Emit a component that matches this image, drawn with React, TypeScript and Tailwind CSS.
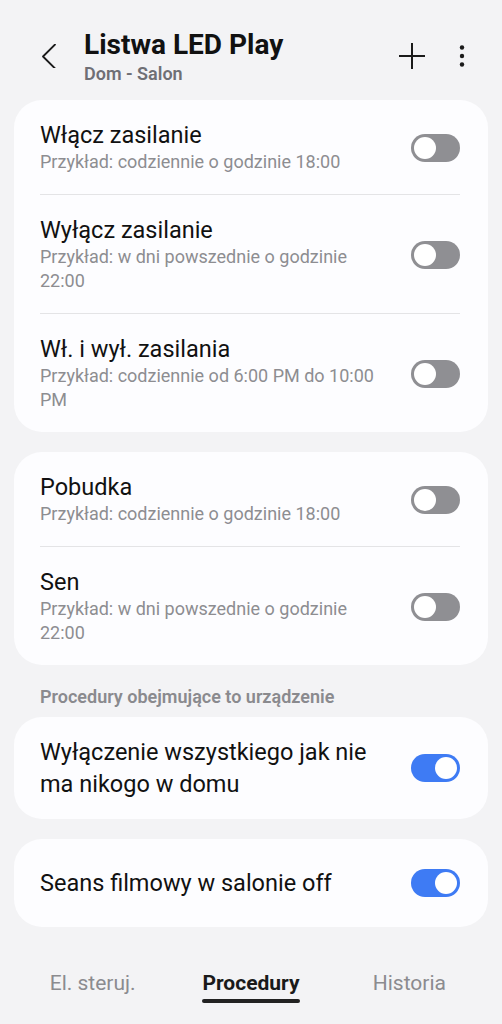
import { ReactNode } from 'react';

//region Toggle
const Toggle = ({ on = false }: { on?: boolean }) => {
	return (
		<div
			className={`flex h-[28px] w-[49px] shrink-0 items-center rounded-full p-[3px] ${
				on ? 'justify-end bg-[#3e7bf4]' : 'justify-start bg-[#8f8f93]'
			}`}
		>
			<div className="h-[22px] w-[22px] rounded-full bg-white" />
		</div>
	);
};

//region Row
const Row = ({
	title,
	sub,
	on = false,
	divider = false,
}: {
	title: string;
	sub?: string;
	on?: boolean;
	divider?: boolean;
}) => {
	return (
		<div
			className={`mr-[28px] ml-[26px] flex items-center gap-4 pt-[21px] pb-[20px] ${
				divider ? 'border-b border-[#e4e4e6]' : ''
			}`}
		>
			<div className="flex grow flex-col">
				<p className="text-[23.5px] leading-[28px] text-[#111111]">{title}</p>
				{sub && <p className="mt-[1px] pr-[10px] text-[18px] leading-[24px] text-[#8d8d91]">{sub}</p>}
			</div>
			<Toggle on={on} />
		</div>
	);
};

//region Card
const Card = ({ children, className = '' }: { children?: ReactNode; className?: string }) => {
	return <div className={`mx-[14px] rounded-[28px] bg-[#fdfdff] ${className}`}>{children}</div>;
};

//region Header
const Header = () => {
	return (
		<header className="flex h-[100px] shrink-0 items-start pt-[29px] pr-[36px] pl-[37px]">
			<svg width="24" height="24" viewBox="0 0 24 24" className="mt-[15px] shrink-0" fill="none">
				<path d="M18 0.5 L6 12.5 L18 24.5" stroke="#1a1a1a" strokeWidth="1.8" strokeLinecap="round" strokeLinejoin="round" />
			</svg>
			<div className="ml-[23px] flex grow flex-col">
				<h1 className="text-[28px] leading-[32px] font-bold text-[#111111]">Listwa LED Play</h1>
				<p className="mt-[2px] text-[18px] leading-[22px] font-semibold text-[#6f6f75]">Dom - Salon</p>
			</div>
			<div className="mt-[14px] flex items-center">
				<svg width="26" height="26" viewBox="0 0 26 26" fill="none">
					<path d="M13 0 V26 M0 13 H26" stroke="#1a1a1a" strokeWidth="2" />
				</svg>
				<svg width="8" height="26" viewBox="0 0 8 26" className="ml-[33px]">
					<circle cx="4" cy="4.5" r="2.2" fill="#1a1a1a" />
					<circle cx="4" cy="13" r="2.2" fill="#1a1a1a" />
					<circle cx="4" cy="21.5" r="2.2" fill="#1a1a1a" />
				</svg>
			</div>
		</header>
	);
};

//region App
const App = () => {
	return (
		<div className="flex h-[1024px] w-[502px] flex-col overflow-hidden bg-[#f3f3f5] font-['Roboto',sans-serif]">
			<Header />
			<main className="flex grow flex-col">
				<Card>
					<Row title="Włącz zasilanie" sub="Przykład: codziennie o godzinie 18:00" divider />
					<Row title="Wyłącz zasilanie" sub="Przykład: w dni powszednie o godzinie 22:00" divider />
					<Row title="Wł. i wył. zasilania" sub="Przykład: codziennie od 6:00 PM do 10:00 PM" />
				</Card>
				<Card className="mt-[20px]">
					<Row title="Pobudka" sub="Przykład: codziennie o godzinie 18:00" divider />
					<Row title="Sen" sub="Przykład: w dni powszednie o godzinie 22:00" />
				</Card>
				<h4 className="mt-[21px] mb-[9px] px-[40px] text-[18px] leading-[22px] font-semibold text-[#8a8a8e]">
					Procedury obejmujące to urządzenie
				</h4>
				<Card>
					<div className="mr-[28px] ml-[26px] flex items-center gap-4 py-[19px]">
						<p className="grow pr-4 text-[23.5px] leading-[32px] text-[#111111]">
							Wyłączenie wszystkiego jak nie ma nikogo w domu
						</p>
						<Toggle on />
					</div>
				</Card>
				<Card className="mt-[20px]">
					<div className="mr-[28px] ml-[26px] flex h-[88px] items-center gap-4">
						<p className="grow text-[23.5px] leading-[32px] text-[#111111]">Seans filmowy w salonie off</p>
						<Toggle on />
					</div>
				</Card>
			</main>
			<nav className="grid h-[96px] shrink-0 grid-cols-3 items-start pt-[42px]">
				<div className="flex justify-center pl-[18px]">
					<span className="text-[21px] leading-[26px] text-[#8b8b8f]">El. steruj.</span>
				</div>
				<div className="flex justify-center">
					<div className="flex flex-col items-center">
						<span className="text-[21px] leading-[26px] font-bold text-[#1a1a1a]">Procedury</span>
						<div className="mt-[3px] h-[4px] w-full rounded-full bg-[#222222]" />
					</div>
				</div>
				<div className="flex justify-center pr-[18px]">
					<span className="text-[21px] leading-[26px] text-[#8b8b8f]">Historia</span>
				</div>
			</nav>
		</div>
	);
};
//endregion

export default App;
